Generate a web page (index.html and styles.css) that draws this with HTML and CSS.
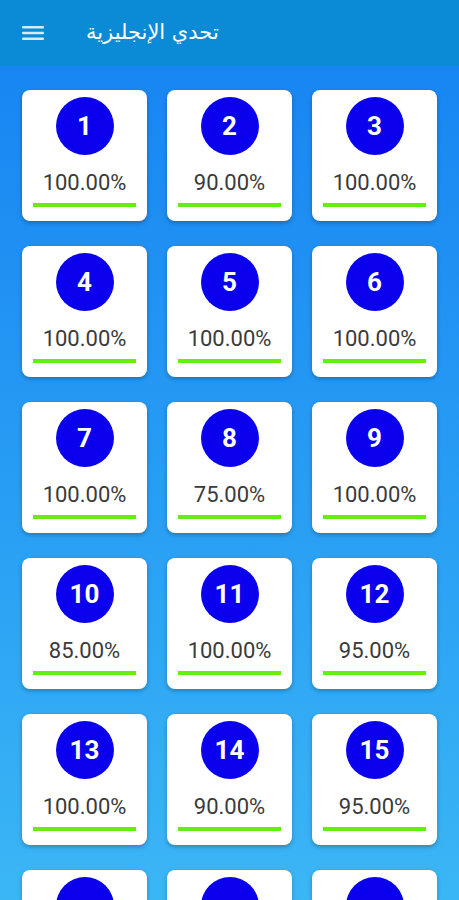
FILE: index.html
```html
<!DOCTYPE html>
<html lang="ar">
<head>
    <meta charset="UTF-8">
    <meta name="viewport" content="width=device-width, initial-scale=1.0">
    <title>تحدي الإنجليزية</title>
    <link rel="stylesheet" href="styles.css">
</head>
<body>
    <div class="screen">
        <header class="app-bar">
            <svg class="menu-icon" width="22" height="16" viewBox="0 0 22 16">
                <rect x="0" y="1" width="22" height="2.4" rx="1"/>
                <rect x="0" y="6.8" width="22" height="2.4" rx="1"/>
                <rect x="0" y="12.6" width="22" height="2.4" rx="1"/>
            </svg>
            <h1 class="title" dir="rtl">تحدي الإنجليزية</h1>
        </header>
        <main class="levels">
            <div class="card"><div class="badge">1</div><div class="score">100.00%</div><div class="bar"></div></div>
            <div class="card"><div class="badge">2</div><div class="score">90.00%</div><div class="bar"></div></div>
            <div class="card"><div class="badge">3</div><div class="score">100.00%</div><div class="bar"></div></div>
            <div class="card"><div class="badge">4</div><div class="score">100.00%</div><div class="bar"></div></div>
            <div class="card"><div class="badge">5</div><div class="score">100.00%</div><div class="bar"></div></div>
            <div class="card"><div class="badge">6</div><div class="score">100.00%</div><div class="bar"></div></div>
            <div class="card"><div class="badge">7</div><div class="score">100.00%</div><div class="bar"></div></div>
            <div class="card"><div class="badge">8</div><div class="score">75.00%</div><div class="bar"></div></div>
            <div class="card"><div class="badge">9</div><div class="score">100.00%</div><div class="bar"></div></div>
            <div class="card"><div class="badge">10</div><div class="score">85.00%</div><div class="bar"></div></div>
            <div class="card"><div class="badge">11</div><div class="score">100.00%</div><div class="bar"></div></div>
            <div class="card"><div class="badge">12</div><div class="score">95.00%</div><div class="bar"></div></div>
            <div class="card"><div class="badge">13</div><div class="score">100.00%</div><div class="bar"></div></div>
            <div class="card"><div class="badge">14</div><div class="score">90.00%</div><div class="bar"></div></div>
            <div class="card"><div class="badge">15</div><div class="score">95.00%</div><div class="bar"></div></div>
            <div class="card"><div class="badge"></div></div>
            <div class="card"><div class="badge"></div></div>
            <div class="card"><div class="badge"></div></div>
        </main>
    </div>
</body>
</html>
```
FILE: styles.css
```css
html, body {
    margin: 0;
    padding: 0;
}
body {
    font-family: Roboto, "Liberation Sans", sans-serif;
}
.screen {
    height: 100vh;
    overflow: hidden;
    display: flex;
    flex-direction: column;
    background: linear-gradient(to bottom, #1682f2 0%, #2aa0f4 60%, #3bb6f5 100%);
}
.app-bar {
    flex: 0 0 66px;
    height: 66px;
    background-color: #0b8ad6;
    display: flex;
    align-items: center;
    padding: 0 22px;
    gap: 42px;
    box-sizing: border-box;
}
.menu-icon {
    fill: #d6ecf8;
    display: block;
}
.title {
    margin: 0;
    color: #ffffff;
    font-family: "DejaVu Sans", sans-serif;
    font-size: 21px;
    font-weight: normal;
    line-height: 1;
    padding-bottom: 2px;
}
.levels {
    display: grid;
    grid-template-columns: repeat(3, 125px);
    grid-auto-rows: 131px;
    column-gap: 20px;
    row-gap: 25px;
    padding: 24px 22px;
}
.card {
    background-color: #ffffff;
    border-radius: 8px;
    box-shadow: 0 2px 4px rgba(0, 0, 0, 0.25);
    display: flex;
    flex-direction: column;
    align-items: center;
    padding-top: 7px;
    box-sizing: border-box;
}
.badge {
    width: 58px;
    height: 58px;
    flex: 0 0 58px;
    border-radius: 50%;
    background-color: #0a00ee;
    color: #ffffff;
    font-size: 26px;
    font-weight: bold;
    display: flex;
    align-items: center;
    justify-content: center;
}
.score {
    margin-top: 15px;
    font-size: 22px;
    line-height: 26px;
    color: #3a3a3a;
}
.bar {
    margin-top: 7px;
    width: 103px;
    height: 4px;
    background-color: #66ee11;
}
```
